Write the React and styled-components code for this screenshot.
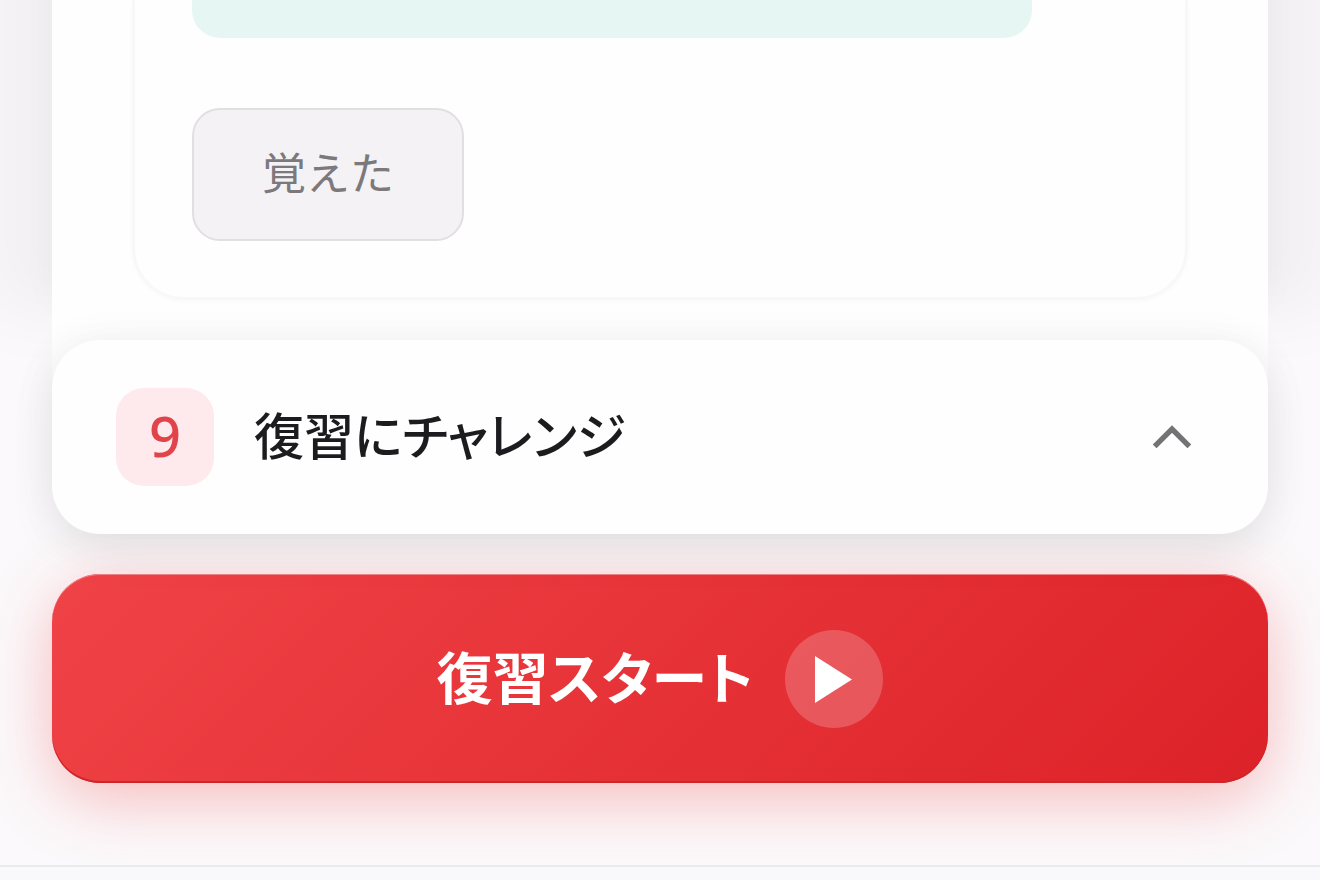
import React, { useState } from "react";
import styled, { createGlobalStyle } from "styled-components";

const GlobalStyle = createGlobalStyle`
  * {
    box-sizing: border-box;
  }

  body {
    margin: 0;
    background-color: #fbf9fb;
    font-family: "Noto Sans CJK JP", sans-serif;
    font-feature-settings: "palt";
    overflow-x: hidden;
  }

  button {
    margin: 0;
    border: none;
    font-family: inherit;
    font-feature-settings: inherit;
    cursor: pointer;
  }
`;

const Base = styled.div`
  display: flex;
  flex-direction: column;
  min-height: 100vh;
  overflow: hidden;
`;

const Main = styled.main`
  display: flex;
  flex-direction: column;
  padding: 0 52px 82px;
`;

const Panel = styled.section`
  padding: 0 80px 80px;
  background-color: #fefefe;
  box-shadow:
    0 -80px 32px rgba(0, 0, 0, 0.04),
    0 -128px 64px 64px rgba(20, 0, 0, 0.04);
`;

const WordCard = styled.div`
  padding: 0 57px 56px;
  border: 3px solid #f9f7fa;
  border-top: none;
  border-radius: 0 0 52px 52px;
  background-color: #fefefe;
  box-shadow: 0 2px 4px rgba(0, 0, 0, 0.02);
`;

const Example = styled.div`
  width: calc(100% - 96px);
  height: 38px;
  margin-bottom: 70px;
  border-radius: 0 0 28px 28px;
  background-color: #e6f6f2;
`;

const LearnedButton = styled.button`
  display: block;
  width: 272px;
  height: 133px;
  padding: 0 0 8px;
  border: 2px solid #e1dfe2;
  border-radius: 28px;
  background-color: #f4f2f5;
  font-size: 44px;
  font-feature-settings: normal;
  line-height: 64px;
  color: #7b797b;
`;

const SectionHeader = styled.button`
  position: relative;
  z-index: 1;
  display: flex;
  align-items: center;
  width: 100%;
  margin-top: -40px;
  padding: 48px 64px;
  border-radius: 48px;
  background-color: #fefefe;
  box-shadow:
    0 16px 48px rgba(0, 0, 0, 0.07),
    0 4px 48px rgba(0, 0, 0, 0.05);
  text-align: left;
`;

const StepNumber = styled.span`
  display: flex;
  align-items: center;
  justify-content: center;
  width: 98px;
  height: 98px;
  margin-right: 40px;
  padding-bottom: 4px;
  border-radius: 28px;
  background-color: #feeaec;
  font-family: "Noto Sans", sans-serif;
  font-size: 56px;
  font-weight: 500;
  line-height: 72px;
  color: #e0444a;
`;

const SectionTitle = styled.span`
  flex: 1;
  padding-bottom: 8px;
  font-size: 50px;
  font-weight: 500;
  line-height: 72px;
  color: #1c1b1e;
`;

const Chevron = styled.svg`
  width: 64px;
  height: 64px;
  fill: none;
  stroke: #737275;
  stroke-width: 2;
  transform: ${(props) => (props.$open ? "none" : "rotate(180deg)")};
`;

const StartButton = styled.button`
  display: flex;
  align-items: center;
  justify-content: center;
  gap: 32px;
  width: 100%;
  height: 209px;
  margin-top: 40px;
  border-radius: 48px;
  background: linear-gradient(135deg, #f04347 0%, #dc2228 100%);
  box-shadow:
    inset 0 1px 0 #ee8488,
    inset 0 -2px 0 #cf2529,
    0 16px 64px rgba(239, 68, 68, 0.34);
  font-size: 56px;
  font-weight: 700;
  line-height: 80px;
  color: #fff;
`;

const StartLabel = styled.span`
  padding-bottom: 8px;
`;

const PlayCircle = styled.span`
  display: flex;
  width: 98px;
  height: 98px;
  border-radius: 50%;
  background-color: rgba(255, 255, 255, 0.2);
`;

const PlayIcon = styled.svg`
  width: 98px;
  height: 98px;
  fill: #fff;
`;

const BottomBar = styled.footer`
  flex: 1;
  min-height: 14px;
  border-top: 2px solid #ebe9ec;
  background-color: #f9f8fb;
  z-index: 1;
`;

const App = () => {
  const [open, setOpen] = useState(true);

  return (
    <>
      <GlobalStyle />
      <Base>
        <Main>
          <Panel>
            <WordCard>
              <Example />
              <LearnedButton type="button">覚えた</LearnedButton>
            </WordCard>
          </Panel>
          <SectionHeader type="button" aria-expanded={open} onClick={() => setOpen(!open)}>
            <StepNumber>9</StepNumber>
            <SectionTitle>復習にチャレンジ</SectionTitle>
            <Chevron $open={open} viewBox="0 0 24 24" aria-hidden="true">
              <path d="M5.5 15.5 L12 9 L18.5 15.5" />
            </Chevron>
          </SectionHeader>
          <StartButton type="button">
            <StartLabel>復習スタート</StartLabel>
            <PlayCircle>
              <PlayIcon viewBox="0 0 98 98" aria-hidden="true">
                <path d="M30 26 L67 49.5 L30 73 Z" />
              </PlayIcon>
            </PlayCircle>
          </StartButton>
        </Main>
        <BottomBar />
      </Base>
    </>
  );
};

export default App;
